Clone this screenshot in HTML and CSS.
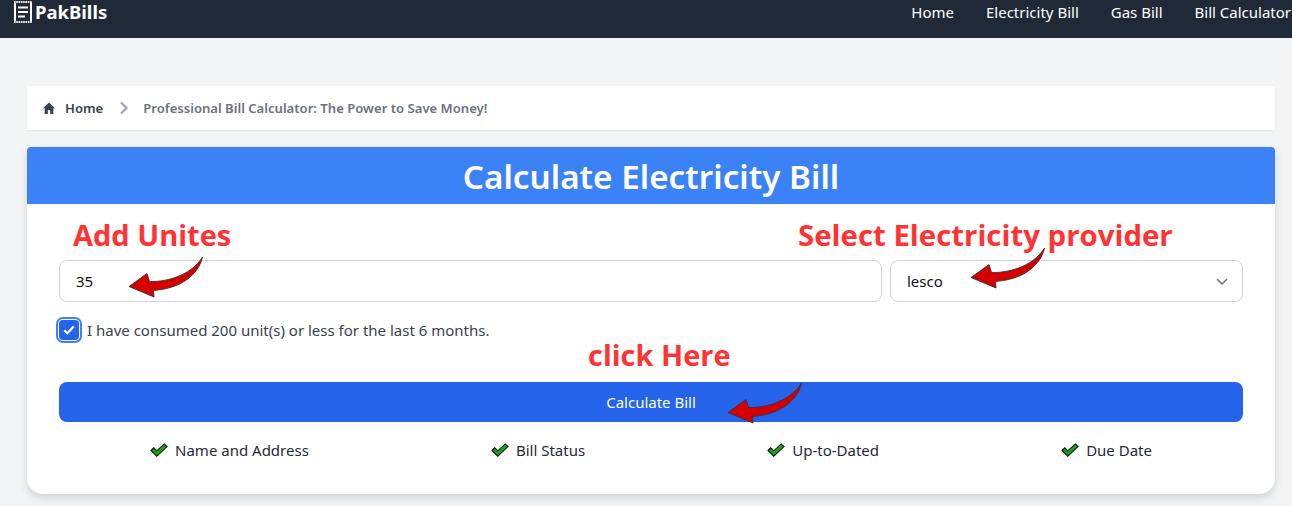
FILE: index.html
```html
<!DOCTYPE html>
<html lang="en">
<head>
<meta charset="utf-8">
<title>PakBills</title>
<link rel="stylesheet" href="styles.css">
</head>
<body>
<nav class="navbar">
  <a class="brand">
    <svg class="brand-icon" viewBox="0 0 18 22" width="18" height="22" aria-hidden="true">
      <path d="M1 1.500v19M17 1.500v19" fill="none" stroke="#fff" stroke-width="2"/>
      <path d="M0 1h18M0 21h18" fill="none" stroke="#fff" stroke-width="2" stroke-dasharray="1.500 .8"/>
      <path d="M4 6.500h10M4 11h10M4 15.500h7" stroke="#fff" stroke-width="1.800" fill="none"/>
    </svg>
    <span>PakBills</span>
  </a>
  <ul class="nav-links">
    <li>Home</li>
    <li>Electricity Bill</li>
    <li>Gas Bill</li>
    <li>Bill Calculator</li>
  </ul>
</nav>
<main class="page">
  <div class="breadcrumb">
    <svg class="home-icon" viewBox="0 0 12 12" width="12" height="12" aria-hidden="true"><path d="M6 .6 0 6.200h1.700V12h3.100V8h2.400v4h3.100V6.200H12z" fill="#374151"/></svg>
    <span class="crumb-home">Home</span>
    <svg class="crumb-sep" viewBox="0 0 10 14" width="10" height="14" aria-hidden="true"><path d="M2 1.500 7.500 7 2 12.500" fill="none" stroke="#9ca3af" stroke-width="2.200"/></svg>
    <span class="crumb-current">Professional Bill Calculator: The Power to Save Money!</span>
  </div>
  <section class="card">
    <h1 class="card-title">Calculate Electricity Bill</h1>
    <div class="card-body">
      <div class="fields">
        <div class="field field-units">35</div>
        <div class="field field-select">
          <span>lesco</span>
          <svg viewBox="0 0 12 7" width="12" height="7" aria-hidden="true"><path d="M1 1 6 6 11 1" fill="none" stroke="#6b7280" stroke-width="1.500"/></svg>
        </div>
      </div>
      <label class="consent">
        <span class="checkbox"><svg viewBox="0 0 12 10" width="12" height="10" aria-hidden="true"><path d="M1.300 5.200 4.400 8.200 10.700 1.600" fill="none" stroke="#fff" stroke-width="2.200"/></svg></span>
        <span>I have consumed 200 unit(s) or less for the last 6 months.</span>
      </label>
      <button class="submit" type="button">Calculate Bill</button>
      <ul class="features">
        <li><svg class="tick" viewBox="0 0 18 14" width="18" height="14" aria-hidden="true"><path d="M1 7.500 3.700 4.800 6.800 7.800 14.200 .9 17 3.600 6.800 13.200z" fill="#14a814" stroke="#111" stroke-width="1.100"/></svg>Name and Address</li>
        <li><svg class="tick" viewBox="0 0 18 14" width="18" height="14" aria-hidden="true"><path d="M1 7.500 3.700 4.800 6.800 7.800 14.200 .9 17 3.600 6.800 13.200z" fill="#14a814" stroke="#111" stroke-width="1.100"/></svg>Bill Status</li>
        <li><svg class="tick" viewBox="0 0 18 14" width="18" height="14" aria-hidden="true"><path d="M1 7.500 3.700 4.800 6.800 7.800 14.200 .9 17 3.600 6.800 13.200z" fill="#14a814" stroke="#111" stroke-width="1.100"/></svg>Up-to-Dated</li>
        <li><svg class="tick" viewBox="0 0 18 14" width="18" height="14" aria-hidden="true"><path d="M1 7.500 3.700 4.800 6.800 7.800 14.200 .9 17 3.600 6.800 13.200z" fill="#14a814" stroke="#111" stroke-width="1.100"/></svg>Due Date</li>
      </ul>
      <span class="note note-units">Add Unites</span>
      <span class="note note-provider">Select Electricity provider</span>
      <span class="note note-click">click Here</span>
      <svg class="arrow arrow-units" viewBox="0 0 76 42" width="76" height="42" aria-hidden="true"><path d="M74.500 1C72 14 60 26 44 31 36 33.500 30 34 25.500 34.500L26 41 1 30.500 19 17.500 21.500 25.500C36 26 62 21 74.500 1Z" fill="#d40000" stroke="#333" stroke-width=".9"/></svg>
      <svg class="arrow arrow-provider" viewBox="0 0 76 42" width="76" height="42" aria-hidden="true"><path d="M74.500 1C72 14 60 26 44 31 36 33.500 30 34 25.500 34.500L26 41 1 30.500 19 17.500 21.500 25.500C36 26 62 21 74.500 1Z" fill="#d40000" stroke="#333" stroke-width=".9"/></svg>
      <svg class="arrow arrow-click" viewBox="0 0 76 42" width="76" height="42" aria-hidden="true"><path d="M74.500 1C72 14 60 26 44 31 36 33.500 30 34 25.500 34.500L26 41 1 30.500 19 17.500 21.500 25.500C36 26 62 21 74.500 1Z" fill="#d40000" stroke="#333" stroke-width=".9"/></svg>
    </div>
  </section>
</main>
</body>
</html>
```
FILE: styles.css
```css
* { box-sizing: border-box; }
html, body { margin: 0; padding: 0; }
body {
  height: 506px;
  overflow: hidden;
  background: #f3f4f6;
  color: #1f2937;
  font-family: "Noto Sans", "Open Sans", sans-serif;
}
.navbar {
  height: 38px;
  background: #1f2937;
  color: #fff;
  display: flex;
  justify-content: space-between;
  align-items: flex-start;
  padding: 1px 1px 0 14px;
}
.brand { display: flex; align-items: center; gap: 3px; font-weight: 700; font-size: 18.5px; line-height: 22px; }
.brand-icon { display: block; }
.nav-links { list-style: none; margin: 0; padding: 0; display: flex; gap: 32px; font-size: 15px; line-height: 22px; }
.page { padding: 48px 17px 0 27px; }
.breadcrumb {
  height: 44px;
  background: #fff;
  display: flex;
  align-items: center;
  padding: 0 16px;
  box-shadow: 0 1px 2px rgba(0, 0, 0, .08);
  font-size: 13.1px;
  font-weight: 600;
}
.crumb-home { margin-left: 10px; color: #374151; }
.crumb-sep { margin: 0 14px 0 16px; }
.crumb-current { color: #6b7280; }
.card {
  margin-top: 17px;
  height: 347px;
  background: #fff;
  border-radius: 4px 4px 16px 16px;
  box-shadow: 0 4px 10px rgba(0, 0, 0, .14);
}
.card-title {
  margin: 0;
  height: 57px;
  background: #3b82f6;
  border-radius: 4px 4px 0 0;
  color: #fff;
  font-size: 33.25px;
  line-height: 58px;
  font-weight: 600;
  text-align: center;
}
.card-body { position: relative; padding: 56px 32px 0; }
.fields { display: flex; gap: 8px; }
.field {
  height: 42px;
  background: #fff;
  border: 1px solid #d1d5db;
  border-radius: 8px;
  padding: 0 14px 0 16px;
  font-size: 15px;
  color: #111;
  display: flex;
  align-items: center;
}
.field-units { width: 823px; }
.field-select { width: 353px; justify-content: space-between; }
.consent { display: flex; align-items: center; gap: 8px; margin-top: 17px; font-size: 15px; line-height: 22px; color: #374151; }
.checkbox {
  width: 20px;
  height: 20px;
  background: #2563eb;
  border-radius: 4px;
  display: flex;
  align-items: center;
  justify-content: center;
  box-shadow: 0 0 0 1px #fff, 0 0 0 3px #3b82f6;
}
.submit {
  display: block;
  width: 100%;
  height: 40px;
  margin-top: 41px;
  border: 0;
  border-radius: 8px;
  background: #2563eb;
  color: #fff;
  font: inherit;
  font-size: 15px;
}
.features { list-style: none; margin: 17px 0 0; padding: 0; display: flex; justify-content: space-around; font-size: 15px; line-height: 22px; color: #1f2937; }
.features li { display: flex; align-items: center; gap: 7px; }
.tick { display: block; }
.note { position: absolute; color: #ff3333; font-weight: 700; font-size: 29px; line-height: 36px; white-space: nowrap; font-family: "Open Sans", sans-serif; }
.note-units { left: 46px; top: 13px; }
.note-provider { left: 771px; top: 13px; font-size: 29.4px; }
.note-click { left: 561px; top: 133px; }
.arrow { position: absolute; }
.arrow-units { left: 101px; top: 52px; }
.arrow-provider { left: 943px; top: 43px; }
.arrow-click { left: 700px; top: 178px; }
```
